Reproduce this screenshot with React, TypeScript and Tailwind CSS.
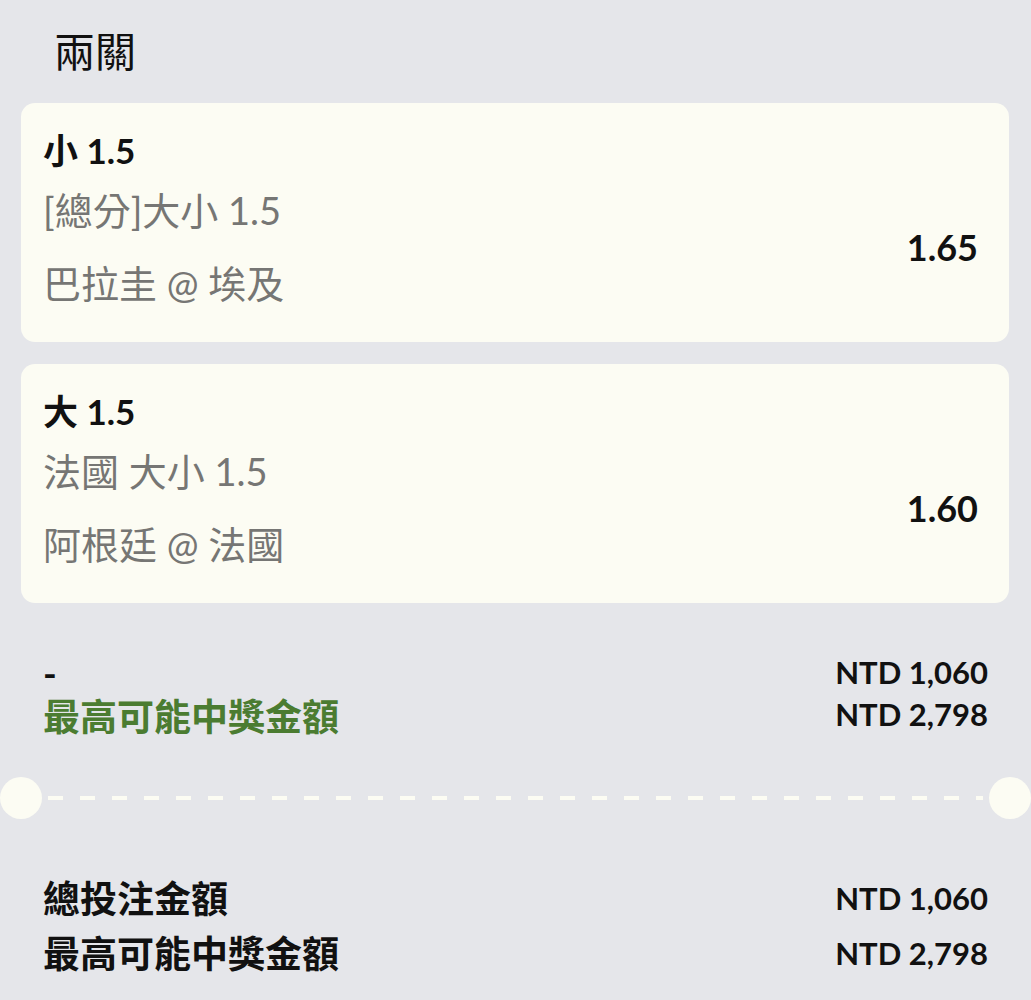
const legs = [
  { pick: "小 1.5", market: "[總分]大小 1.5", match: "巴拉圭 @ 埃及", odds: "1.65" },
  { pick: "大 1.5", market: "法國 大小 1.5", match: "阿根廷 @ 法國", odds: "1.60" },
];

function LegCard({ pick, market, match, odds }: (typeof legs)[number]) {
  return (
    <div className="flex items-center justify-between rounded-[14px] bg-[#fcfcf3] pl-[22px] pr-[31px] pt-[22px] pb-[21px]">
      <div className="flex flex-col">
        <div className="text-[35px] font-bold leading-[50px] text-[#111]">{pick}</div>
        <div className="text-[38px] leading-[71px] text-[#767674]">{market}</div>
        <div className="text-[38px] leading-[75px] text-[#767674]">{match}</div>
      </div>
      <div className="mt-[48px] text-[36px] font-bold text-[#111]">{odds}</div>
    </div>
  );
}

export default function App() {
  return (
    <main className="min-h-screen w-full overflow-hidden bg-[#e5e6ea] font-['Lato','Noto_Sans_CJK_TC',sans-serif]">
      <div className="flex h-[103px] items-center pl-[54px] text-[41px] text-[#111]">兩關</div>

      <div className="flex flex-col gap-[22px] pl-[21px] pr-[22px]">
        {legs.map((leg) => (
          <LegCard key={leg.pick} {...leg} />
        ))}
      </div>

      <div className="mt-[48px] flex justify-between pl-[43px] pr-[43px]">
        <div className="flex flex-col text-[37px] font-bold leading-[44px]">
          <span className="text-[#111]">-</span>
          <span className="text-[#4b7c31]">最高可能中獎金額</span>
        </div>
        <div className="flex flex-col items-end text-[31px] font-bold leading-[42px] text-[#111]">
          <span>NTD 1,060</span>
          <span>NTD 2,798</span>
        </div>
      </div>

      <div className="mt-[38px] flex h-[42px] items-center">
        <div className="h-[42px] w-[42px] shrink-0 rounded-full bg-[#fcfcf3]" />
        <div className="mx-[6px] h-[4px] flex-1 bg-[repeating-linear-gradient(90deg,#fcfcf3_0_15px,transparent_15px_32px)]" />
        <div className="h-[42px] w-[42px] shrink-0 rounded-full bg-[#fcfcf3]" />
      </div>

      <div className="mt-[52px] flex justify-between pl-[43px] pr-[43px] pb-[20px]">
        <div className="flex flex-col text-[37px] font-bold leading-[55px] text-[#111]">
          <span>總投注金額</span>
          <span>最高可能中獎金額</span>
        </div>
        <div className="flex flex-col items-end text-[31px] font-bold leading-[55px] text-[#111]">
          <span>NTD 1,060</span>
          <span>NTD 2,798</span>
        </div>
      </div>
    </main>
  );
}
